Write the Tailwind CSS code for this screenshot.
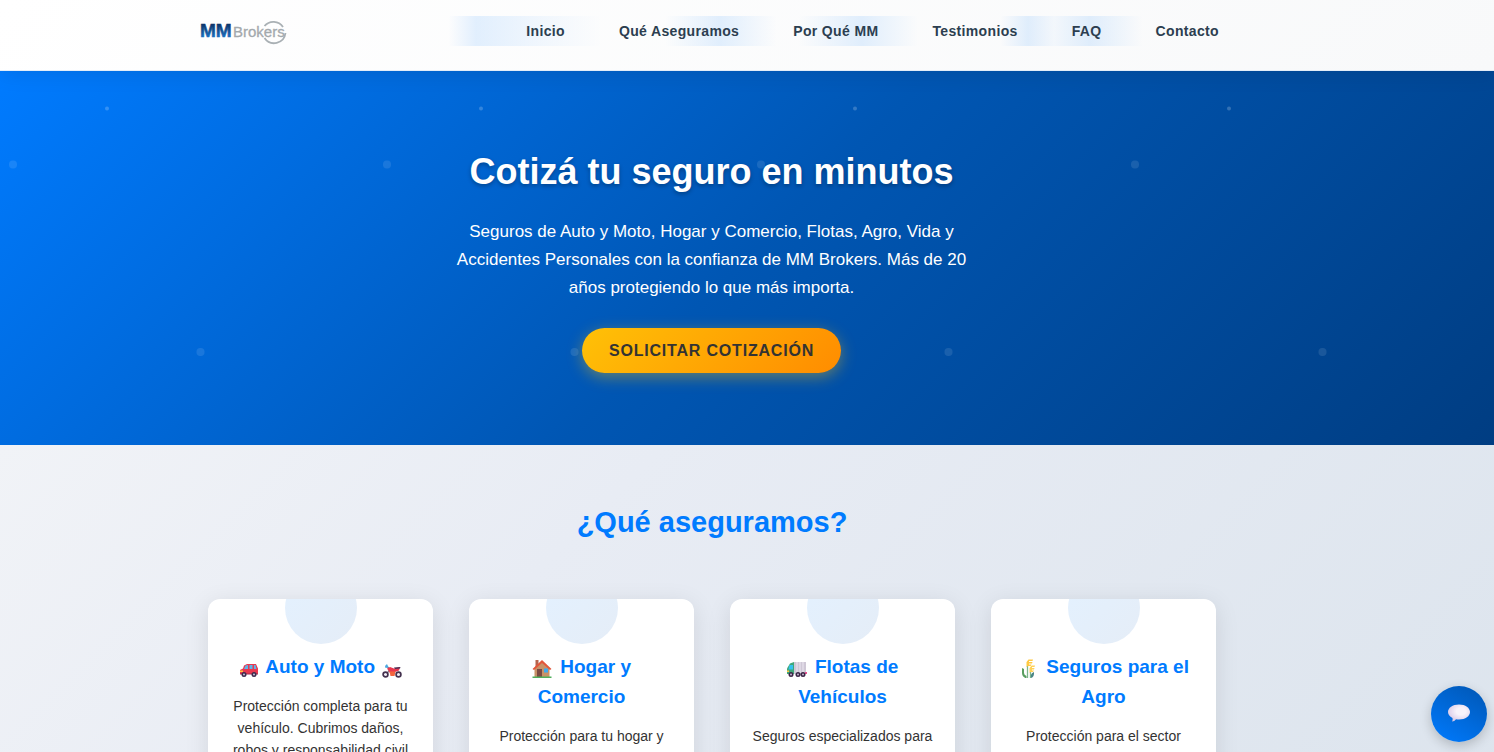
<!DOCTYPE html>
<html lang="es">
<head>
    <meta charset="UTF-8">
    <meta name="viewport" content="width=device-width, initial-scale=1.0">
    <title>MM Brokers - Seguros</title>
    <script src="https://cdn.jsdelivr.net/npm/@tailwindcss/browser@4"></script>
</head>
<body class="font-['Liberation_Sans',Arial,sans-serif] text-[#333333] bg-[#e6eaf2]">
    <!-- Header -->
    <header class="relative z-10 bg-linear-[135deg,#ffffff_0%,#f8f9fa_100%] border-b border-[#e3edf8] shadow-[0_2px_20px_rgba(0,0,0,0.1)] pt-4 pb-[22px] pr-[70px]">
        <div class="max-w-5xl mx-auto flex justify-between items-start">
            <a href="#inicio" aria-label="MM Brokers">
                <svg class="w-[90px] h-8" viewBox="0 0 90 32" font-family="Liberation Sans, Arial, sans-serif">
                    <defs>
                        <linearGradient id="logo-blue" x1="0" y1="8" x2="0" y2="21" gradientUnits="userSpaceOnUse">
                            <stop offset="0" stop-color="#0d3468"/>
                            <stop offset="1" stop-color="#1a6fc0"/>
                        </linearGradient>
                    </defs>
                    <path d="M64.500 10a11.500 11.500 0 0 1 18.500 1M85.500 17a11.500 11.500 0 0 1-21 5" fill="none" stroke="#a9b0b4" stroke-width="1.800"/>
                    <text x="0" y="21" font-size="19" font-weight="700" fill="url(#logo-blue)" stroke="url(#logo-blue)" stroke-width="0.600">MM</text>
                    <text x="33" y="21" font-size="15" fill="#a3a9ad" stroke="#a3a9ad" stroke-width="0.300">Brokers</text>
                </svg>
            </a>
            <nav class="pl-[78px] pr-[5px] bg-[linear-gradient(90deg,transparent_0px,rgba(0,123,255,0.11)_28px,rgba(0,123,255,0.05)_88px,transparent_155px,transparent_217px,rgba(0,123,255,0.11)_272px,transparent_329px,transparent_350px,rgba(0,123,255,0.11)_414px,transparent_470px,transparent_552px,rgba(0,123,255,0.11)_580px,rgba(0,123,255,0.03)_606px,rgba(0,123,255,0.11)_642px,transparent_695px)]">
                <ul class="flex gap-[54px] text-sm leading-[30px] font-bold tracking-wide text-[#2c3e50]">
                    <li><a href="#inicio">Inicio</a></li>
                    <li><a href="#aseguramos">Qué Aseguramos</a></li>
                    <li><a href="#porque">Por Qué MM</a></li>
                    <li><a href="#testimonios">Testimonios</a></li>
                    <li><a href="#faq">FAQ</a></li>
                    <li><a href="#contacto">Contacto</a></li>
                </ul>
            </nav>
        </div>
    </header>

    <!-- Hero -->
    <section id="inicio" class="relative bg-linear-[135deg,#007bff_0%,#0056b3_50%,#003d82_100%] text-white text-center py-[72px] pr-[71px]">
        <svg class="absolute inset-0 w-full h-full" aria-hidden="true">
            <defs>
                <pattern id="dots" width="374" height="374" patternUnits="userSpaceOnUse">
                    <circle cx="107" cy="37.500" r="2" fill="#ffffff" fill-opacity="0.2"/>
                    <circle cx="13" cy="93.500" r="4" fill="#ffffff" fill-opacity="0.1"/>
                    <circle cx="200.500" cy="281" r="4" fill="#ffffff" fill-opacity="0.1"/>
                </pattern>
            </defs>
            <rect width="100%" height="100%" fill="url(#dots)"/>
        </svg>
        <div class="relative max-w-[540px] mx-auto">
            <h1 class="text-4xl leading-[58px] font-bold text-shadow-[0_2px_4px_rgba(0,0,0,0.3)]">Cotizá tu seguro en minutos</h1>
            <p class="mt-[17px] text-[17px] leading-7">Seguros de Auto y Moto, Hogar y Comercio, Flotas, Agro, Vida y Accidentes Personales con la confianza de MM Brokers. Más de 20 años protegiendo lo que más importa.</p>
            <button type="button" class="mt-[26px] h-[45px] px-[27px] rounded-full bg-linear-[135deg,#ffc107_0%,#ff8c00_100%] text-[#333333] text-base font-bold uppercase tracking-wider shadow-[0_4px_15px_rgba(255,193,7,0.4)] align-top">Solicitar Cotización</button>
        </div>
    </section>

    <!-- Coverage cards -->
    <section id="aseguramos" class="bg-linear-[135deg,#f1f3f7_0%,#e8ecf4_35%,#dce4ed_100%] pt-[54px] pb-14 pr-[70px]">
        <div class="max-w-5xl mx-auto px-2">
            <h2 class="text-[29px] leading-[46px] font-bold text-center text-[#007bff]">¿Qué aseguramos?</h2>
            <div class="mt-[54px] grid grid-cols-4 gap-9 text-center">
                <article class="relative overflow-hidden rounded-xl bg-white px-[18px] pt-[53px] pb-7 shadow-[0_5px_25px_rgba(0,0,0,0.1)]">
                    <div class="absolute -top-[27px] left-1/2 -translate-x-1/2 size-[72px] rounded-full bg-linear-[135deg,#e3f1ff_0%,#e5edf7_100%]"></div>
                    <h3 class="relative text-[19px] leading-[30px] font-bold text-[#007bff]">
                        <svg class="inline-block size-5 mr-[2px]" viewBox="0 0 20 20" aria-hidden="true">
                            <path d="M5 7.500 8 6h9l2 4.500v5.500H1v-4l3-1.500z" fill="#e8384f"/>
                            <path d="M6.500 7.500 5 11h4V7zM10.500 7v4h3V7zM15 7v4h2.500L16.500 7z" fill="#5fb2e8"/>
                            <path d="M1 12.500h3V14H1z" fill="#ffc83d"/>
                            <path d="M1 15.500h18v1H1z" fill="#a52b50"/>
                            <circle cx="5" cy="16.500" r="2.500" fill="#3b2b4d"/><circle cx="5" cy="16.500" r="1" fill="#c9bfd6"/>
                            <circle cx="15" cy="16.500" r="2.500" fill="#3b2b4d"/><circle cx="15" cy="16.500" r="1" fill="#c9bfd6"/>
                        </svg>
                        Auto y Moto
                        <svg class="inline-block size-5 ml-[2px]" viewBox="0 0 20 20" aria-hidden="true">
                            <path d="M4.500 8 8 11l-4 6" fill="none" stroke="#7d7390" stroke-width="1.200"/>
                            <path d="M3 8 5 6l1.500 3.500L3.500 10z" fill="#4aa8e0"/>
                            <path d="M5 10.500 8 9l4 1.500L18 9l-1 3.500L13 14l-5 1z" fill="#e8384f"/>
                            <path d="M12 9.500 18.500 9l-.5 1.500-5 .5z" fill="#4a2f55"/>
                            <path d="M7.500 13.500h6l-1 4.500H8.500z" fill="#f5653f"/>
                            <circle cx="3.500" cy="16.500" r="2.400" fill="#f0edf5" stroke="#44324f" stroke-width="1.700"/>
                            <circle cx="16.500" cy="16.500" r="2.400" fill="#f0edf5" stroke="#44324f" stroke-width="1.700"/>
                        </svg>
                    </h3>
                    <p class="mt-[13px] text-sm leading-[22px]">Protección completa para tu vehículo. Cubrimos daños, robos y responsabilidad civil</p>
                </article>
                <article class="relative overflow-hidden rounded-xl bg-white px-[18px] pt-[53px] pb-7 shadow-[0_5px_25px_rgba(0,0,0,0.1)]">
                    <div class="absolute -top-[27px] left-1/2 -translate-x-1/2 size-[72px] rounded-full bg-linear-[135deg,#e3f1ff_0%,#e5edf7_100%]"></div>
                    <h3 class="relative text-[19px] leading-[30px] font-bold text-[#007bff]">
                        <svg class="inline-block size-5 mr-[3px]" viewBox="0 0 20 20" aria-hidden="true">
                            <path d="M3.500 2h3v7h-3z" fill="#b5654f"/>
                            <path d="M2.500 10 10 4l7.500 6v9h-15z" fill="#c99268"/>
                            <path d="M10 2 0.500 11l1.500 1L10 5l8 7 1.500-1z" fill="#e2573b"/>
                            <path d="M5 11h5v8H5z" fill="#7b4a43"/>
                            <path d="M12 10.500h4v4h-4z" fill="#3fa9f0"/>
                            <path d="M0.500 18.500h19V20H0.500z" fill="#4fae5c"/>
                        </svg>
                        Hogar y<br>Comercio
                    </h3>
                    <p class="mt-[13px] text-sm leading-[22px]">Protección para tu hogar y</p>
                </article>
                <article class="relative overflow-hidden rounded-xl bg-white px-[18px] pt-[53px] pb-7 shadow-[0_5px_25px_rgba(0,0,0,0.1)]">
                    <div class="absolute -top-[27px] left-1/2 -translate-x-1/2 size-[72px] rounded-full bg-linear-[135deg,#e3f1ff_0%,#e5edf7_100%]"></div>
                    <h3 class="relative text-[19px] leading-[30px] font-bold text-[#007bff]">
                        <svg class="inline-block size-5 mr-[3px]" viewBox="0 0 20 20" aria-hidden="true">
                            <path d="M7 4h12v12H7z" fill="#cfc8d6"/>
                            <path d="M10 4v11M13 4v11M16 4v11" stroke="#ede8f2" stroke-width="1"/>
                            <path d="M3 5.500 7 4v12H0v-5.500z" fill="#3fa779"/>
                            <path d="M2.500 7H6v4.500H1.500z" fill="#35c2ee"/>
                            <path d="M0 12.500h2V14H0z" fill="#ffc83d"/>
                            <path d="M18 14h2v2h-2z" fill="#e8508f"/>
                            <circle cx="4" cy="16.500" r="2.500" fill="#3b2545"/><circle cx="4" cy="16.500" r="1" fill="#c3b6cf"/>
                            <circle cx="11" cy="16.500" r="2.500" fill="#3b2545"/><circle cx="11" cy="16.500" r="1" fill="#c3b6cf"/>
                            <circle cx="16" cy="16.500" r="2.500" fill="#3b2545"/><circle cx="16" cy="16.500" r="1" fill="#c3b6cf"/>
                        </svg>
                        Flotas de<br>Vehículos
                    </h3>
                    <p class="mt-[13px] text-sm leading-[22px]">Seguros especializados para</p>
                </article>
                <article class="relative overflow-hidden rounded-xl bg-white px-[18px] pt-[53px] pb-7 shadow-[0_5px_25px_rgba(0,0,0,0.1)]">
                    <div class="absolute -top-[27px] left-1/2 -translate-x-1/2 size-[72px] rounded-full bg-linear-[135deg,#e3f1ff_0%,#e5edf7_100%]"></div>
                    <h3 class="relative text-[19px] leading-[30px] font-bold text-[#007bff]">
                        <svg class="inline-block size-5 mr-[3px]" viewBox="0 0 20 20" aria-hidden="true">
                            <path d="M9.500 20V8M12.500 20v-6" stroke="#7db58a" stroke-width="1.300"/>
                            <path d="M4 10l2 1v4q0 2 2.500 3v2.500Q4 19 4 15z" fill="#5a9e60"/>
                            <path d="M16 14q-4 1.500-3 6 3.500-1 3-6z" fill="#4a8585"/>
                            <path d="M8.500 9V4l2-2.500H15L14.500 3H11v1h3.500L14 5.500h-3v1h2.500L12.500 8H10z" fill="#ffc942"/>
                            <path d="M11.500 15v-5l2-2.500H17L16.500 9H14v1h2.500L16 11.500h-2v1h2L15 14h-2.500z" fill="#ffd257"/>
                        </svg>
                        Seguros para el<br>Agro
                    </h3>
                    <p class="mt-[13px] text-sm leading-[22px]">Protección para el sector</p>
                </article>
            </div>
        </div>
    </section>

    <!-- Chat button -->
    <button type="button" aria-label="Abrir chat" class="fixed right-[7px] bottom-[10px] z-20 size-14 rounded-full bg-linear-[30deg,#007bff_0%,#0056b3_100%] shadow-[0_4px_12px_rgba(0,0,0,0.2)] flex items-center justify-center">
        <svg class="w-6 h-6" viewBox="0 0 24 24" aria-hidden="true">
            <defs>
                <radialGradient id="bubble" cx="0.6" cy="0.4" r="0.7">
                    <stop offset="0.3" stop-color="#f8f3fb"/>
                    <stop offset="1" stop-color="#d5c3e4"/>
                </radialGradient>
            </defs>
            <path d="M12 2.500c6.500 0 11 3.500 11 7.500s-4.500 7.500-11 7.500q-1.500 0-3-.3Q7.500 19.500 5 19.500q1-1.500.5-3.500Q1 13.500 1 10c0-4 4.500-7.500 11-7.500z" fill="url(#bubble)"/>
        </svg>
    </button>
</body>
</html>
